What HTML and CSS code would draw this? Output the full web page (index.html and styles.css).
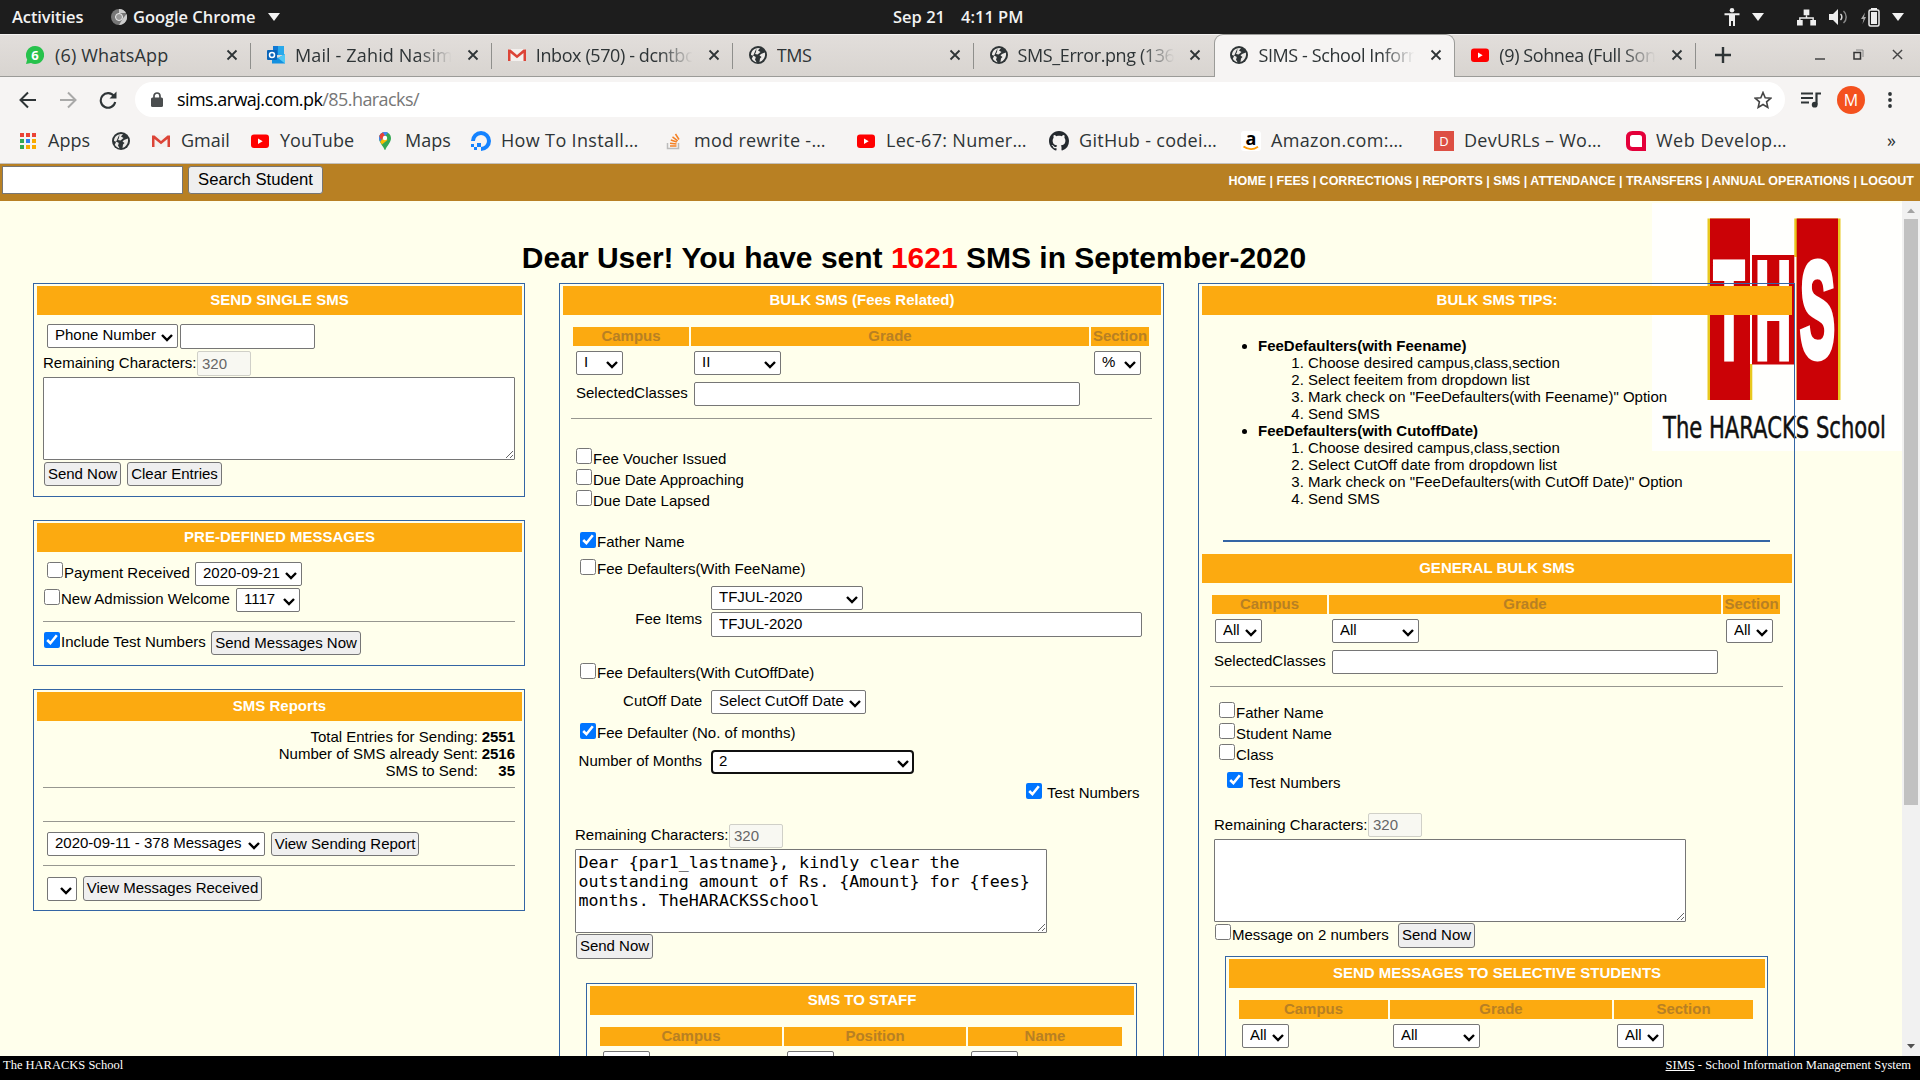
FILE: index.html
```html
<!DOCTYPE html>
<html lang="en">
<head>
<meta charset="utf-8">
<title>SIMS - School Information Management System</title>
<link rel="stylesheet" href="styles.css">
</head>
<body>
<svg class="defs" width="0" height="0">
  <symbol id="globe" viewBox="0 0 18 18"><circle cx="9" cy="9" r="9" fill="#2e3436"/><path d="M7.500 2.200C4 3 2 6 2 9l3.500 1.200c1 .2 1.500 1 1 2L6 13.500l1.500 2.700c-1-.1-3.500-1.300-4.700-3.500M7.500 2.200 11 2l-2 2.500 2.500 1.500-3 2.500-2.500-.5 1-2zM12 8l3.800-1.500c.6 2 .2 4.500-1.300 6.500-1 1.500-2.500 2.500-4 3l.5-3.500 1.500-1.500-2-1.500z" fill="#eceae8"/></symbol>
  <symbol id="yt" viewBox="0 0 18 18"><rect y="2.500" width="18" height="13.500" rx="3" fill="#f00"/><path d="M7 6.500v5.400l4.700-2.700z" fill="#fff"/></symbol>
  <symbol id="gmail" viewBox="0 0 18 18"><path d="M1 3h16v12H1z" fill="#f3f0ee"/><path d="M0 3.500h2.500L9 9l6.500-5.500H18V15h-2.500V7L9 12.300 2.500 7v8H0z" fill="#dc4437"/></symbol>
  <symbol id="x" viewBox="0 0 12 12"><path d="M1.500 1.500l9 9m0-9l-9 9" stroke="#2e3436" stroke-width="1.800" fill="none"/></symbol>
  <symbol id="tri" viewBox="0 0 12 8"><path d="M0 0h12L6 8z" fill="#f2f2f2"/></symbol>
</svg>

<header class="topbar">
  <span class="activities">Activities</span>
  <svg class="chrome-ic" viewBox="0 0 16 16"><circle cx="8" cy="8" r="8" fill="#777"/><path d="M8 0a8 8 0 0 1 7 4H8zM15.500 5a8 8 0 0 1-7.500 11l3.500-6z" fill="#ccc"/><circle cx="8" cy="8" r="3.500" fill="#999" stroke="#eee"/></svg>
  <span class="appname">Google Chrome</span>
  <svg class="tri"><use href="#tri"/></svg>
  <span class="date">Sep 21</span><span class="clock">4:11 PM</span>
  <div class="tray">
    <svg class="ic-a11y" viewBox="0 0 16 18"><circle cx="8" cy="2.300" r="2.300" fill="#eee"/><path d="M.5 5.200h15v2H11V18H9v-5H7v5H5V7.200H.5z" fill="#eee"/></svg>
    <svg class="tri t1"><use href="#tri"/></svg>
    <svg class="ic-net" viewBox="0 0 20 17"><path d="M7 0h6v6H7zM0 11h6v6H0zM14 11h6v6h-6z" fill="#eee"/><path d="M10 6v3M3 11V9h14v2" stroke="#eee" stroke-width="1.500" fill="none"/></svg>
    <svg class="ic-vol" viewBox="0 0 19 16"><path d="M0 5h4l5-5v16l-5-5H0z" fill="#eee"/><path d="M11.500 5a4 4 0 0 1 0 6" stroke="#ddd" stroke-width="1.500" fill="none"/><path d="M14.500 2a8 8 0 0 1 0 12" stroke="#888" stroke-width="1.500" fill="none"/></svg>
    <svg class="ic-bat" viewBox="0 0 19 19"><path d="M4 4.500L0 11h2.500L1.500 16 5 9H3z" fill="#aaa"/><rect x="8" y="2" width="10" height="16" rx="1.500" fill="none" stroke="#eee" stroke-width="1.500"/><path d="M10 0h6v2h-6zM10 4h6v12h-6z" fill="#eee"/></svg>
    <svg class="tri t2"><use href="#tri"/></svg>
  </div>
</header>

<div class="tabs">
  <div class="tab"><svg class="fav" viewBox="0 0 18 18"><path d="M9 0a9 9 0 1 1-4 17L0 18l1.200-4.500A9 9 0 0 1 9 0z" fill="#27c24c"/><text x="9" y="14" text-anchor="middle" font-size="13" font-weight="700" font-family="Open Sans, sans-serif" fill="#fff">6</text></svg><span class="tt wide">(6) WhatsApp</span><svg class="cl"><use href="#x"/></svg></div>
  <div class="tab"><svg class="fav" viewBox="0 0 18 18"><path d="M6 0h11v9H6z" fill="#28a8ea"/><path d="M6 0h5v9H6z" fill="#0f78d4"/><path d="M5 8l6 4 7-4v9.500H5z" fill="#1490df"/><path d="M11 12l7 5.500V8z" fill="#50c8f5"/><rect y="4" width="10" height="10" rx="1" fill="#0a64b8"/><circle cx="5" cy="9" r="2.500" fill="none" stroke="#fff" stroke-width="1.500"/></svg><span class="tt fade wide">Mail - Zahid Nasim - O</span><svg class="cl"><use href="#x"/></svg></div>
  <div class="tab"><svg class="fav"><use href="#gmail"/></svg><span class="tt fade">Inbox (570) - dcntbc@</span><svg class="cl"><use href="#x"/></svg></div>
  <div class="tab"><svg class="fav"><use href="#globe"/></svg><span class="tt">TMS</span><svg class="cl"><use href="#x"/></svg></div>
  <div class="tab nosep"><svg class="fav"><use href="#globe"/></svg><span class="tt fade">SMS_Error.png (1366×7</span><svg class="cl"><use href="#x"/></svg></div>
  <div class="tab active"><svg class="fav"><use href="#globe"/></svg><span class="tt fade">SIMS - School Informat</span><svg class="cl"><use href="#x"/></svg></div>
  <div class="tab last"><svg class="fav"><use href="#yt"/></svg><span class="tt fade">(9) Sohnea (Full Song)</span><svg class="cl"><use href="#x"/></svg></div>
  <div class="winctl">
    <svg class="plus" viewBox="0 0 16 16"><path d="M8 0v16M0 8h16" stroke="#2e3436" stroke-width="2.400"/></svg>
    <svg class="min" viewBox="0 0 10 12"><path d="M0 10h10" stroke="#444" stroke-width="1.500"/></svg>
    <svg class="res" viewBox="0 0 11 11"><path d="M1 3.500h6.500v6.500H1z" stroke="#333" stroke-width="1.500" fill="none"/><path d="M3 1h7v7" stroke="#888" fill="none"/></svg>
    <svg class="wx" viewBox="0 0 12 12"><path d="M1 1l10 10m0-10L1 11" stroke="#444" stroke-width="1.500"/></svg>
  </div>
</div>

<div class="toolbar">
  <svg class="nv" viewBox="0 0 18 18"><path d="M17 9H2m7-7.500L1.500 9 9 16.500" stroke="#2e3436" stroke-width="2" fill="none"/></svg>
  <svg class="nv" viewBox="0 0 18 18"><path d="M1 9h15M9 1.500L16.500 9 9 16.500" stroke="#a9a9a8" stroke-width="2" fill="none"/></svg>
  <svg class="nv" viewBox="0 0 18 18"><path d="M15 5.200A7.300 7.300 0 1 0 16.200 11" stroke="#2e3436" stroke-width="2.100" fill="none"/><path d="M17.500.5v7h-7z" fill="#2e3436"/></svg>
  <div class="omni">
    <svg class="lock" viewBox="0 0 12 15"><rect y="5.500" width="12" height="9.500" rx="1.500" fill="#4a4d4f"/><path d="M3 6V4a3 3 0 0 1 6 0v2" stroke="#4a4d4f" stroke-width="1.700" fill="none"/></svg>
    <span class="url">sims.arwaj.com.pk<i>/85.haracks/</i></span>
    <svg class="star" viewBox="0 0 18 18"><path d="M9 1.500l2.200 5.200 5.600.5-4.200 3.700 1.200 5.500L9 13.500l-4.800 2.900 1.200-5.500L1.200 7.200l5.600-.5z" stroke="#444" stroke-width="1.600" fill="none"/></svg>
  </div>
  <svg class="queue" viewBox="0 0 20 16"><path d="M0 1.500h12M0 6h12M0 10.500h8" stroke="#2e3436" stroke-width="2"/><path d="M15.500 12.500V1.500H20" stroke="#2e3436" stroke-width="2.200" fill="none"/><circle cx="13.700" cy="12.700" r="2.900" fill="#2e3436"/></svg>
  <span class="avatar">M</span>
  <svg class="kebab" viewBox="0 0 4 16"><circle cx="2" cy="2" r="1.900"/><circle cx="2" cy="8" r="1.900"/><circle cx="2" cy="14" r="1.900"/></svg>
</div>

<div class="bookmarks">
  <div class="bm b1"><svg class="fav" viewBox="0 0 18 18"><path d="M1 1h4v4H1zM7 1h4v4H7zM13 1h4v4h-4z" fill="#ea4335"/><path d="M1 7h4v4H1zM1 13h4v4H1z" fill="#34a853"/><path d="M7 7h4v4H7z" fill="#2f7ff0"/><path d="M13 7h4v4h-4zM7 13h4v4H7zM13 13h4v4h-4z" fill="#f9ab00"/></svg>Apps</div>
  <div class="bm b2"><svg class="fav"><use href="#globe"/></svg></div>
  <div class="bm b3"><svg class="fav"><use href="#gmail"/></svg>Gmail</div>
  <div class="bm b4"><svg class="fav"><use href="#yt"/></svg>YouTube</div>
  <div class="bm b5"><svg class="fav" viewBox="0 0 18 18"><path d="M9 19C8 14.500 3 11 3 6a6 6 0 0 1 12 0c0 5-5 8.500-6 13z" fill="#34a853"/><path d="M3 6a6 6 0 0 1 9-5.200L4.200 9.800C3.500 8.500 3 7.500 3 6z" fill="#4285f4"/><path d="M3.300 4A6 6 0 0 1 7 .4L9 4 5 8z" fill="#ea4335"/><path d="M4.200 9.800L9 4l2.500 4L6 12.500z" fill="#fbbc04"/><circle cx="9" cy="6" r="2.200" fill="#fff"/></svg>Maps</div>
  <div class="bm b6"><svg class="fav big" viewBox="0 0 20 20"><path d="M10 18a8 8 0 1 0-8-8" fill="none" stroke="#1583ff" stroke-width="4"/><path d="M6 12h4v4H6zM3 16h3v3H3zM0 13h3v3H0z" fill="#1583ff"/></svg>How To Install…</div>
  <div class="bm b7"><svg class="fav" viewBox="0 0 18 18"><path d="M2.500 11v5.500h11V11" stroke="#bcbbbb" stroke-width="1.500" fill="none"/><path d="M5 14h6.500M5 11.200l6.500.8M5.800 8l6 2M7.500 4.800l5.200 4M10.500 2l3.500 5.500" stroke="#f48024" stroke-width="1.500"/></svg>mod rewrite -…</div>
  <div class="bm b8"><svg class="fav"><use href="#yt"/></svg>Lec-67: Numer…</div>
  <div class="bm b9"><svg class="fav big" viewBox="0 0 16 16"><path fill="#24292e" d="M8 0C3.580 0 0 3.580 0 8c0 3.540 2.290 6.530 5.470 7.590.4.070.55-.17.55-.38 0-.19-.01-.82-.01-1.490-2.010.37-2.530-.49-2.690-.94-.09-.23-.48-.94-.82-1.130-.28-.15-.68-.52-.01-.53.630-.01 1.080.58 1.230.82.720 1.210 1.870.87 2.330.66.070-.52.280-.87.510-1.070-1.780-.2-3.640-.89-3.640-3.950 0-.87.310-1.590.82-2.150-.08-.2-.36-1.020.08-2.120 0 0 .67-.21 2.200.82.640-.18 1.320-.27 2-.27s1.360.09 2 .27c1.530-1.040 2.200-.82 2.200-.82.440 1.100.16 1.920.08 2.120.51.560.82 1.270.82 2.150 0 3.070-1.870 3.750-3.650 3.950.29.250.54.730.54 1.480 0 1.070-.01 1.930-.01 2.200 0 .21.150.46.550.38A8.010 8.010 0 0 0 16 8c0-4.420-3.580-8-8-8z"/></svg>GitHub - codei…</div>
  <div class="bm b10"><svg class="fav big" viewBox="0 0 20 20"><rect width="20" height="20" rx="3" fill="#fff"/><text x="10" y="14" text-anchor="middle" font-size="18" font-weight="700" font-family="Open Sans, sans-serif">a</text><path d="M2.500 15.500c5 3.500 10.500 3 14.500.3" stroke="#ff9900" stroke-width="1.800" fill="none"/></svg>Amazon.com:…</div>
  <div class="bm b11"><svg class="fav big" viewBox="0 0 20 20"><rect width="20" height="20" fill="#dd4f43"/><text x="10" y="15" text-anchor="middle" font-size="13" font-family="Open Sans, sans-serif" fill="#fff">D</text></svg>DevURLs – Wo…</div>
  <div class="bm b12"><svg class="fav big" viewBox="0 0 20 20"><path d="M2 6.500Q2 2 6.500 2h7Q18 2 18 6.500V18H6.500Q2 18 2 13.500z" fill="#fff" stroke="#e4003a" stroke-width="4"/></svg>Web Develop…</div>
  <div class="more">»</div>
</div>

<div class="searchbar">
  <input class="q"><button class="qb">Search Student</button>
  <nav>HOME | FEES | CORRECTIONS | REPORTS | SMS | ATTENDANCE | TRANSFERS | ANNUAL OPERATIONS | LOGOUT</nav>
</div>

<main class="page">
  <svg class="logo" viewBox="0 0 250 248">
    <rect width="250" height="248" fill="#fffffd"/>
    <path d="M55.500 15.500H98V197H55.500zM142.300 15.500h46.200V197h-44V54h-2.200zM98 161h2.300v36H98z" fill="#e8c81e"/>
    <path d="M58 15.500h40V197H58zM144.700 15.500H186V197h-41.300z" fill="#cb0206"/>
    <path d="M100 52h42.300v109.500H100z" fill="#cb0206"/>
    <g font-family="Liberation Sans, sans-serif" font-weight="700" fill="#fff" stroke="#fff">
      <text x="61.500" y="155" font-size="139" textLength="31" lengthAdjust="spacingAndGlyphs" stroke-width="6">T</text>
      <text x="103.500" y="154.500" font-size="137" textLength="35.500" lengthAdjust="spacingAndGlyphs" stroke-width="7">H</text>
      <text x="148" y="154" font-size="136" textLength="35" lengthAdjust="spacingAndGlyphs" stroke-width="7">S</text>
    </g>
    <text x="11" y="235" font-family="DejaVu Sans, sans-serif" font-size="30" textLength="223" lengthAdjust="spacingAndGlyphs" fill="#111" stroke="#111" stroke-width=".5">The HARACKS School</text>
  </svg>
  <h1>Dear User! You have sent <b>1621</b> SMS in September-2020</h1>
  <div class="cols">
    <div class="col left">
      <section class="panel p1">
        <h2>SEND SINGLE SMS</h2>
        <div class="body">
          <div class="row mt9"><select class="ml4 w131"><option>Phone Number</option></select><input class="ml2 w135 tall"></div>
          <div class="row mt3"><span class="d3 w154">Remaining Characters:</span><input class="w54 tall" value="320" disabled></div>
          <textarea class="mt2 ta83"></textarea>
          <div class="row mt2"><button class="ml1 w77">Send Now</button><button class="ml6 w95">Clear Entries</button></div>
        </div>
      </section>
      <section class="panel p2">
        <h2>PRE-DEFINED MESSAGES</h2>
        <div class="body">
          <div class="row mt10"><input type="checkbox" class="ml4"><span class="ml1 d2 w131">Payment Received</span><select class="w107"><option>2020-09-21</option></select></div>
          <div class="row mt2"><input type="checkbox" class="ml1 d1"><span class="ml1 d2 w175">New Admission Welcome</span><select class="w64"><option>1117</option></select></div>
          <hr class="mt9">
          <div class="row mt9"><input type="checkbox" class="ml1 d1" checked><span class="ml1 d2 w150">Include Test Numbers</span><button class="w150">Send Messages Now</button></div>
        </div>
      </section>
      <section class="panel p3">
        <h2>SMS Reports</h2>
        <div class="body">
          <div class="totals">
            <span>Total Entries for Sending:</span><b>2551</b>
            <span>Number of SMS already Sent:</span><b>2516</b>
            <span>SMS to Send:</span><b>35</b>
          </div>
          <hr class="mt8"><hr class="mt33">
          <div class="row mt10"><select class="ml4 w218"><option>2020-09-11 - 378 Messages</option></select><button class="ml6 w148">View Sending Report</button></div>
          <hr class="mt9">
          <div class="row mt10"><select class="ml4 d1 w30"><option></option></select><button class="ml6 w179 tall">View Messages Received</button></div>
        </div>
      </section>
    </div>

    <div class="col mid">
      <section class="panel">
        <h2>BULK SMS (Fees Related)</h2>
        <div class="body">
          <div class="ths g1"><span>Campus</span><span>Grade</span><span>Section</span></div>
          <div class="row mt5"><select class="ml5 w47"><option>I</option></select><select class="ml71 w87"><option>II</option></select><select class="ml313 w47"><option>%</option></select></div>
          <div class="row mt7"><span class="ml5 d2 w118">SelectedClasses</span><input class="w386"></div>
          <hr class="mt12">
          <div class="row sm mt29"><input type="checkbox" class="ml5"><span class="ml1 d2">Fee Voucher Issued</span></div>
          <div class="row sm mt5"><input type="checkbox" class="ml5"><span class="ml1 d2">Due Date Approaching</span></div>
          <div class="row sm mt5"><input type="checkbox" class="ml5"><span class="ml1 d2">Due Date Lapsed</span></div>
          <div class="row sm mt26"><input type="checkbox" class="ml9" checked><span class="ml1 d1">Father Name</span></div>
          <div class="row sm mt11"><input type="checkbox" class="ml9"><span class="ml1 d1">Fee Defaulters(With FeeName)</span></div>
          <div class="row mt11"><select class="ml140 w152"><option>TFJUL-2020</option></select></div>
          <div class="row mt2"><span class="lab up">Fee Items</span><input class="w431 tall pad" value="TFJUL-2020"></div>
          <div class="row sm mt27"><input type="checkbox" class="ml9"><span class="ml1 d1">Fee Defaulters(With CutOffDate)</span></div>
          <div class="row mt11"><span class="lab d2">CutOff Date</span><select class="w155"><option>Select CutOff Date</option></select></div>
          <div class="row sm mt9"><input type="checkbox" class="ml9" checked><span class="ml1 d1">Fee Defaulter (No. of months)</span></div>
          <div class="row mt11"><span class="lab d2">Number of Months</span><select class="w203 focus"><option>2</option></select></div>
          <div class="row sm mt9"><input type="checkbox" class="ml455" checked><span class="ml5 d1">Test Numbers</span></div>
          <div class="row mt25"><span class="ml4 d2 w154">Remaining Characters:</span><input class="w54" value="320" disabled></div>
          <textarea class="mt1 ml4 ta84">Dear {par1_lastname}, kindly clear the outstanding amount of Rs. {Amount} for {fees} months. TheHARACKSSchool</textarea>
          <div class="row mt1"><button class="ml5 w77 tall">Send Now</button></div>
          <section class="panel inner i1">
            <h2>SMS TO STAFF</h2>
            <div class="body">
              <div class="ths g3"><span>Campus</span><span>Position</span><span>Name</span></div>
              <div class="row mt5"><select class="ml5 w47"><option></option></select><select class="ml137 w47"><option></option></select><select class="ml137 w47"><option></option></select></div>
            </div>
          </section>
        </div>
      </section>
    </div>

    <div class="col right">
      <section class="panel">
        <h2>BULK SMS TIPS:</h2>
        <ul class="tips">
          <li><b>FeeDefaulters(with Feename)</b>
            <ol><li>Choose desired campus,class,section</li><li>Select feeitem from dropdown list</li><li>Mark check on "FeeDefaulters(with Feename)" Option</li><li>Send SMS</li></ol></li>
          <li><b>FeeDefaulters(with CutoffDate)</b>
            <ol><li>Choose desired campus,class,section</li><li>Select CutOff date from dropdown list</li><li>Mark check on "FeeDefaulters(with CutOff Date)" Option</li><li>Send SMS</li></ol></li>
        </ul>
        <div class="rule"></div>
        <h2>GENERAL BULK SMS</h2>
        <div class="body">
          <div class="ths g2"><span>Campus</span><span>Grade</span><span>Section</span></div>
          <div class="row mt5"><select class="ml5 w47"><option>All</option></select><select class="ml70 w87"><option>All</option></select><select class="ml307 w47"><option>All</option></select></div>
          <div class="row mt7"><span class="ml4 d2 w118">SelectedClasses</span><input class="w386"></div>
          <hr class="mt12">
          <div class="row sm mt15"><input type="checkbox" class="ml9"><span class="ml1 d2">Father Name</span></div>
          <div class="row sm mt5"><input type="checkbox" class="ml9"><span class="ml1 d2">Student Name</span></div>
          <div class="row sm mt5"><input type="checkbox" class="ml9"><span class="ml1 d2">Class</span></div>
          <div class="row sm mt12"><input type="checkbox" class="ml17" checked><span class="ml5 d2">Test Numbers</span></div>
          <div class="row mt25"><span class="ml4 d3 w154">Remaining Characters:</span><input class="w54" value="320" disabled></div>
          <textarea class="mt2 ml4 ta83"></textarea>
          <div class="row mt1"><input type="checkbox" class="ml5 d1"><span class="ml1 d3 w166">Message on 2 numbers</span><button class="w77 tall">Send Now</button></div>
          <section class="panel inner i2">
            <h2>SEND MESSAGES TO SELECTIVE STUDENTS</h2>
            <div class="body">
              <div class="ths g4"><span>Campus</span><span>Grade</span><span>Section</span></div>
              <div class="row mt5"><select class="ml5 w47"><option>All</option></select><select class="ml104 w87"><option>All</option></select><select class="ml137 w47"><option>All</option></select></div>
            </div>
          </section>
        </div>
      </section>
    </div>
  </div>
  <div class="scroll">
    <svg width="18" height="18" viewBox="0 0 18 18"><path d="M5 12l4-4.500 4 4.500z" fill="#a3a3a3"/></svg>
    <div class="thumb"></div>
    <svg class="dn" width="18" height="18" viewBox="0 0 18 18"><path d="M5 6l4 4.500L13 6z" fill="#505050"/></svg>
  </div>
</main>
<footer><span>The HARACKS School</span><span><u>SIMS</u> - School Information Management System</span></footer>
</body>
</html>
```
FILE: styles.css
```css
* { box-sizing: border-box; }
body { margin: 0; width: 1920px; height: 1080px; overflow: hidden; display: flex; flex-direction: column; font-family: "Liberation Sans", Arial, sans-serif; font-size: 15px; line-height: 17px; color: #000; }
svg { display: block; flex: none; }
.defs { position: absolute; }

/* desktop bar */
.topbar { height: 34px; background: #1d1d1d; color: #f2f2f2; display: flex; align-items: center; font: 600 16.5px/34px "Open Sans", sans-serif; flex: none; white-space: nowrap; }
.activities { margin-left: 12px; width: 99px; letter-spacing: -0.1px; }
.chrome-ic { width: 16px; height: 16px; margin-right: 6px; }
.appname { width: 135px; letter-spacing: -0.05px; }
.tri { width: 12px; height: 8px; }
.date { margin-left: 613px; width: 68px; }
.clock { width: 80px; }
.tray { display: flex; align-items: center; margin-left: auto; padding-right: 16px; }
.ic-a11y { width: 16px; height: 18px; }
.t1 { margin-left: 12px; }
.ic-net { width: 19px; height: 17px; margin-left: 33px; }
.ic-vol { width: 19px; height: 16px; margin-left: 13px; }
.ic-bat { width: 19px; height: 19px; margin-left: 13px; }
.t2 { margin-left: 12px; }

/* tabs */
.tabs { height: 43px; flex: none; display: flex; background: linear-gradient(#e2dedb, #d8d4d0); border-top: 1px solid #f3f1f0; border-bottom: 1px solid #9b9b98; padding-left: 10px; font: 18px/40px "Open Sans", sans-serif; color: #2e3436; }
.tab { width: 240.900px; display: flex; align-items: center; padding: 0 13px 2px 16px; position: relative; }
.tab::after { content: ""; position: absolute; right: 0; top: 8px; width: 1px; height: 26px; background: #8f8f8c; }
.tab.nosep::after, .tab.active::after { display: none; }
.fav { width: 18px; height: 18px; margin-right: 11px; }
.fav.big { width: 20px; height: 20px; margin-right: 10px; }
.tt { width: 158px; overflow: hidden; white-space: nowrap; letter-spacing: -0.4px; }
.tt.wide { letter-spacing: 0.15px; }
.tab .tt { margin-left: -1px; }
.tab:first-child .tt { margin-left: 0; }
.fade { -webkit-mask-image: linear-gradient(90deg, #000 78%, transparent 99%); mask-image: linear-gradient(90deg, #000 78%, transparent 99%); }
.cl { width: 12px; height: 12px; margin-left: auto; margin-right: 0; }
.tab.active { background: #f6f4f3; border: 1px solid #9b9b98; border-bottom: 0; border-radius: 9px 9px 0 0; margin-top: -1px; height: 43px; padding: 0 12px 2px 15px; }
.winctl { display: flex; align-items: center; flex: 1; padding-bottom: 2px; }
.plus { width: 16px; height: 16px; margin-left: 19px; }
.min { width: 10px; height: 12px; margin-left: 84px; }
.res { width: 11px; height: 11px; margin-left: 28px; }
.wx { width: 11px; height: 11px; margin-left: 28px; }

/* toolbar */
.toolbar { height: 43px; flex: none; background: #f6f4f3; display: flex; align-items: center; padding: 2px 0 0 19px; }
.nv { width: 18px; height: 18px; margin-right: 22px; }
.omni { margin-left: -4px; width: 1650px; height: 35px; border-radius: 18px; background: #fff; display: flex; align-items: center; padding-left: 16px; }
.lock { width: 12px; height: 15px; margin-right: 14px; }
.url { font: 18px/35px "Open Sans", sans-serif; letter-spacing: -0.57px; width: 1576px; }
.url i { font-style: normal; color: #777; }
.star { width: 18px; height: 18px; margin-left: 1px; }
.queue { width: 20px; height: 16px; margin-left: 16px; }
.avatar { width: 28px; height: 28px; margin-left: 16px; border-radius: 50%; background: #f4511e; color: #fff; font: 16px/28px "Open Sans", sans-serif; text-align: center; }
.kebab { width: 4px; height: 16px; margin-left: 23px; fill: #2e3436; }
.bookmarks { height: 44px; flex: none; background: #f6f4f3; border-bottom: 1px solid #c3bfbb; display: flex; align-items: flex-start; padding-left: 19px; font: 18px/41px "Open Sans", sans-serif; color: #2e3436; white-space: nowrap; }
.bm { display: flex; align-items: center; height: 41px; }
.b1 { width: 93px; } .b2 { width: 40px; } .b3 { width: 99px; } .b4 { width: 125px; } .b5 { width: 95px; } .b6 { width: 194px; letter-spacing: .35px; }
.b7 { width: 192px; letter-spacing: .3px; } .b8 { width: 192px; letter-spacing: .3px; } .b9 { width: 192px; letter-spacing: .3px; } .b10 { width: 193px; letter-spacing: .35px; } .b11 { width: 192px; letter-spacing: .25px; } .b12 { width: 261px; letter-spacing: .5px; }

/* search strip */
.searchbar { height: 37px; flex: none; background: #b88023; display: flex; padding: 2px 6px 0 2px; }
.searchbar .q { width: 181px; height: 28px; border-radius: 0; }
.searchbar .qb { width: 135px; height: 28px; margin-left: 5px; font-size: 16.670px; padding-bottom: 1px; }
nav { margin-left: auto; color: #fff; font-weight: 700; font-size: 12.500px; line-height: 30px; white-space: nowrap; }

/* page */
.page { height: 855px; flex: none; background: #ffffec; position: relative; overflow: hidden; }
.logo { position: absolute; left: 1652px; top: 2px; width: 250px; height: 248px; }
h1 { position: relative; margin: 0; padding-top: 41px; width: 1828px; height: 82px; text-align: center; font-size: 30px; line-height: 32px; }
h1 b { color: #f00; }
.cols { position: relative; display: flex; align-items: flex-start; padding-left: 33px; }
.left { width: 492px; }
.mid { width: 605px; margin-left: 34px; }
.right { width: 597px; margin-left: 34px; }
.panel { border: 1px solid #3465a4; padding: 2px 2px 0 3px; margin-bottom: 23px; }
.mid > .panel, .right > .panel { height: 900px; }
.p1 { height: 214px; } .p2 { height: 146px; } .p3 { height: 222px; }
h2 { margin: 0; height: 29px; background: #fcaa10; color: #fff; font-size: 15px; line-height: 28px; text-align: center; }
.body { padding-left: 6px; width: 478px; }
.mid .body, .right .body { padding-left: 8px; width: auto; }
.row { display: flex; align-items: flex-start; height: 24px; white-space: nowrap; }
.row.sm { height: 16px; }
.row > * { flex: none; }
hr { border: 0; height: 1px; background: #979790; margin: 0; width: 472px; }
.mid hr { width: 581px; }
.right hr { width: 573px; }
input, select, button, textarea { margin: 0; font: 15px "Liberation Sans", Arial, sans-serif; color: #000; border: 1px solid #767676; border-radius: 2px; background-color: #fff; height: 24px; padding: 0 4px 1px; display: block; }
input[type=checkbox] { width: 16px; height: 16px; }
input:disabled { background: #f8f8f2; color: #666; border-color: #d0d0c8; }
.row button { padding-bottom: 2px; }
button { background: #efefef; border-radius: 3px; padding: 0; text-align: center; }
select { appearance: none; padding: 0 0 3px 7px; background: #fff url("data:image/svg+xml,%3Csvg xmlns='http://www.w3.org/2000/svg' width='12' height='8' viewBox='0 0 12 8'%3E%3Cpath d='M1 1l5 5 5-5' fill='none' stroke='%23000' stroke-width='2.4'/%3E%3C/svg%3E") no-repeat right 4px top 9px; }
.focus { border: 2px solid #101010; border-radius: 4px; padding-left: 6px; background-position: right 3px top 8px; }
.tall { height: 25px; }
.pad { padding-left: 7px; padding-bottom: 2px; }
textarea { width: 472px; padding: 2.500px; font: 16.670px/19px "DejaVu Sans Mono", monospace; border-radius: 1px; }
.ta83 { height: 83px; } .ta84 { height: 84px; }
.totals { display: grid; grid-template-columns: 435px 37px; margin-top: 7px; text-align: right; }
.ths { display: grid; gap: 2px; margin: 12px 0 0 2px; }
.ths span { background: #fcaa10; color: #b88023; font-weight: 700; text-align: center; height: 19px; line-height: 18px; }
.g1 { grid-template-columns: 116px 398px 58px; }
.g2 { grid-template-columns: 115px 392px 57px; }
.g3 { grid-template-columns: 182px 182px 154px; }
.g4 { grid-template-columns: 149px 222px 139px; }
.lab { width: 131px; text-align: right; margin-right: 9px; }
.up { margin-top: -2px; }
.inner { height: 200px; margin-left: 15px; }
.i1 { width: 551px; margin-top: 25px; }
.i2 { width: 543px; margin-top: 9px; }
.tips { margin: 22px 0 0; padding-left: 56px; height: 170px; }
.tips ol { padding-left: 50px; margin: 0; }
.rule { height: 2px; width: 547px; background: #3465a4; margin: 33px 0 12px 21px; }

/* scrollbar */
.scroll { position: absolute; right: 0; top: 0; width: 18px; height: 855px; background: #f1f1f1; display: flex; flex-direction: column; align-items: center; }
.thumb { width: 14px; height: 586px; background: #c1c1c1; }
.dn { margin-top: auto; }

footer { height: 24px; flex: none; background: #000; color: #fff; font: 12.500px/18px "Liberation Serif", serif; display: flex; justify-content: space-between; padding: 0 9px 0 3px; }

/* spacing scale */
.mt1 { margin-top: 1px; } .mt2 { margin-top: 2px; } .mt3 { margin-top: 3px; } .mt5 { margin-top: 5px; } .mt7 { margin-top: 7px; } .mt8 { margin-top: 8px; } .mt9 { margin-top: 9px; } .mt10 { margin-top: 10px; } .mt11 { margin-top: 11px; } .mt12 { margin-top: 12px; } .mt15 { margin-top: 15px; } .mt25 { margin-top: 25px; } .mt26 { margin-top: 26px; } .mt27 { margin-top: 27px; } .mt29 { margin-top: 29px; } .mt33 { margin-top: 33px; }
.d1 { margin-top: 1px; } .d2 { margin-top: 2px; } .d3 { margin-top: 3px; }
.ml1 { margin-left: 1px; } .ml2 { margin-left: 2px; } .ml4 { margin-left: 4px; } .ml5 { margin-left: 5px; } .ml6 { margin-left: 6px; } .ml9 { margin-left: 9px; } .ml17 { margin-left: 17px; } .ml70 { margin-left: 70px; } .ml71 { margin-left: 71px; } .ml104 { margin-left: 104px; } .ml137 { margin-left: 137px; } .ml140 { margin-left: 140px; } .ml307 { margin-left: 307px; } .ml313 { margin-left: 313px; } .ml455 { margin-left: 455px; }
.w30 { width: 30px; } .w47 { width: 47px; } .w54 { width: 54px; } .w64 { width: 64px; } .w77 { width: 77px; } .w87 { width: 87px; } .w95 { width: 95px; } .w107 { width: 107px; } .w118 { width: 118px; } .w131 { width: 131px; } .w135 { width: 135px; } .w148 { width: 148px; } .w150 { width: 150px; } .w152 { width: 152px; } .w154 { width: 154px; } .w155 { width: 155px; } .w166 { width: 166px; } .w175 { width: 175px; } .w179 { width: 179px; } .w203 { width: 203px; } .w218 { width: 218px; } .w386 { width: 386px; } .w431 { width: 431px; }
```
